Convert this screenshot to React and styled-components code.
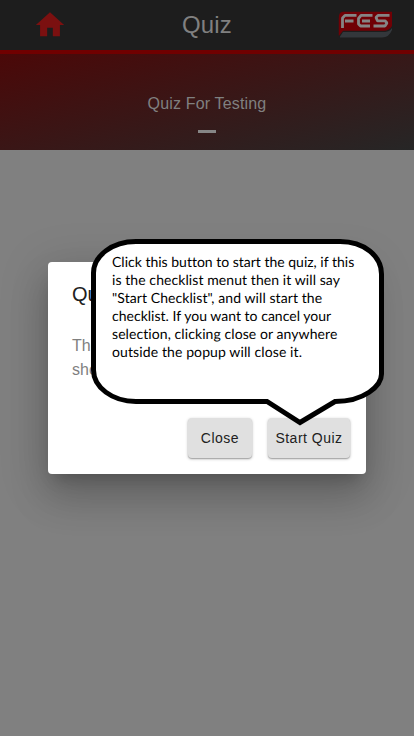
import React from "react";
import styled, { createGlobalStyle } from "styled-components";

const Global = createGlobalStyle`
  * { box-sizing: border-box; }
  body { margin: 0; background: #808080; font-family: "Liberation Sans", Arial, sans-serif; }
`;

const Screen = styled.div`
  position: relative;
  height: 736px;
  overflow: hidden;
  background: #808080;
`;

const Toolbar = styled.header`
  height: 54px;
  display: grid;
  grid-template-columns: 100px 1fr 100px;
  background: #1d1d1d;
  border-bottom: 4px solid #700000;
`;

const Slot = styled.div`
  display: flex;
  padding: ${(p) => p.$pad};
`;

const Title = styled.h1`
  margin: 0;
  text-align: center;
  font-size: 24px;
  font-weight: 400;
  line-height: 50px;
  letter-spacing: 0.2px;
  color: #808080;
`;

const Hero = styled.section`
  height: 96px;
  display: flex;
  flex-direction: column;
  align-items: center;
  padding-top: 40px;
  background: linear-gradient(165deg, #4b0808 0%, #262626 100%);
  color: #808080;
`;

const HeroTitle = styled.h2`
  margin: 0;
  font-size: 16px;
  font-weight: 400;
  line-height: 20px;
  letter-spacing: 0.16px;
`;

const Indicator = styled.div`
  width: 18px;
  height: 3px;
  margin-top: 16px;
  background: #868686;
`;

const Overlay = styled.div`
  position: absolute;
  inset: 0;
  display: flex;
  align-items: center;
  justify-content: center;
`;

const Dialog = styled.section`
  width: 318px;
  height: 212px;
  display: flex;
  flex-direction: column;
  padding: 18px 16px 16px 24px;
  border-radius: 4px;
  background: #fff;
  box-shadow: 0 11px 15px -7px rgba(0, 0, 0, 0.2),
    0 24px 38px 3px rgba(0, 0, 0, 0.14), 0 9px 46px 8px rgba(0, 0, 0, 0.12);
`;

const DialogTitle = styled.h3`
  margin: 0;
  font-size: 20px;
  font-weight: 400;
  line-height: 28px;
  color: #212121;
`;

const DialogText = styled.p`
  margin: 26px 0 0;
  font-size: 16px;
  line-height: 24px;
  color: #7f7f7f;
`;

const Actions = styled.div`
  display: flex;
  justify-content: flex-end;
  gap: 16px;
  margin-top: auto;
`;

const Button = styled.button`
  width: ${(p) => p.$width};
  height: 40px;
  padding: 0;
  border: 0;
  border-radius: 4px;
  background: #e0e0e0;
  color: #212121;
  font: 14px/40px "Liberation Sans", Arial, sans-serif;
  letter-spacing: 0.5px;
  white-space: nowrap;
  box-shadow: 0 1px 3px rgba(0, 0, 0, 0.3), 0 1px 1px rgba(0, 0, 0, 0.18);
`;

const Callout = styled.aside`
  position: absolute;
  left: 88px;
  top: 236px;
  width: 300px;
  height: 192px;
`;

const CalloutShape = styled.svg`
  position: absolute;
  inset: 0;
`;

const CalloutText = styled.div`
  position: relative;
  margin: 0;
  padding: 17px 0 20px 24px;
  font: 14px/18px Lato, Carlito, Calibri, sans-serif;
  font-variant-ligatures: none;
  text-rendering: geometricPrecision;
  color: #000;
`;

const Line = styled.div`
  height: 18px;
  white-space: nowrap;
  letter-spacing: ${(p) => p.$track}px;
`;

const lines = [
  ["Click this button to start the quiz, if this", 0],
  ["is the checklist menut then it will say", 0.08],
  ['"Start Checklist", and will start the', 0.08],
  ["checklist. If you want to cancel your", 0.02],
  ["selection, clicking close or anywhere", 0.08],
  ["outside the popup will close it.", 0.11],
];

const HomeIcon = () => (
  <svg width="34" height="34" viewBox="0 0 24 24" fill="#7b1010">
    <path d="M10 20v-6h4v6h5v-8h3L12 3 2 12h3v8z" />
  </svg>
);

const Logo = () => (
  <svg width="56" height="28" viewBox="0 0 56 28">
    <path d="M2 25.500 5 21H47Q52 20.500 54 17V19Q51 26.500 44 26.500H2Z" fill="#33373b" />
    <path d="M5 .8H54V15Q51 19.800 46 19.800H5L.8 25V7Q.8 .8 5 .8Z" fill="#700005" />
    <g fill="none" stroke="#858585" strokeWidth="2.800" strokeLinejoin="bevel">
      <path d="M4.500 17V7L7 4.400H18.500M7 10H15.500" />
      <path d="M34.500 4.400H23L20.500 7.500V13L22.500 15H32M24 10H32" />
      <path d="M51.500 4.400H40L38 6.500 39.500 9.800H47L49 12 47 15H35.500" />
    </g>
  </svg>
);

export default function App() {
  return (
    <>
      <Global />
      <Screen>
        <Toolbar>
          <Slot $pad="7.500px 0 0 32.500px"><HomeIcon /></Slot>
          <Title>Quiz</Title>
          <Slot $pad="11px 0 0 24px"><Logo /></Slot>
        </Toolbar>
        <Hero>
          <HeroTitle>Quiz For Testing</HeroTitle>
          <Indicator />
        </Hero>
        <Overlay>
          <Dialog>
            <DialogTitle>Quiz</DialogTitle>
            <DialogText>The<br />sho</DialogText>
            <Actions>
              <Button $width="64px">Close</Button>
              <Button $width="82px">Start Quiz</Button>
            </Actions>
          </Dialog>
        </Overlay>
        <Callout>
          <CalloutShape width="300" height="192" viewBox="0 0 300 192">
            <path
              d="M48 5.500H252C276 5.500 293.500 20 293.500 38V138C293.500 150 276 165.500 247 165.500L212 186.500 179 165.500H48C24 165.500 5.500 151 5.500 134V37C5.500 20 24 5.500 48 5.500Z"
              fill="#fff"
              stroke="#000"
              strokeWidth="5"
            />
          </CalloutShape>
          <CalloutText>
            {lines.map(([text, track]) => (
              <Line key={text} $track={track}>{text}</Line>
            ))}
          </CalloutText>
        </Callout>
      </Screen>
    </>
  );
}
